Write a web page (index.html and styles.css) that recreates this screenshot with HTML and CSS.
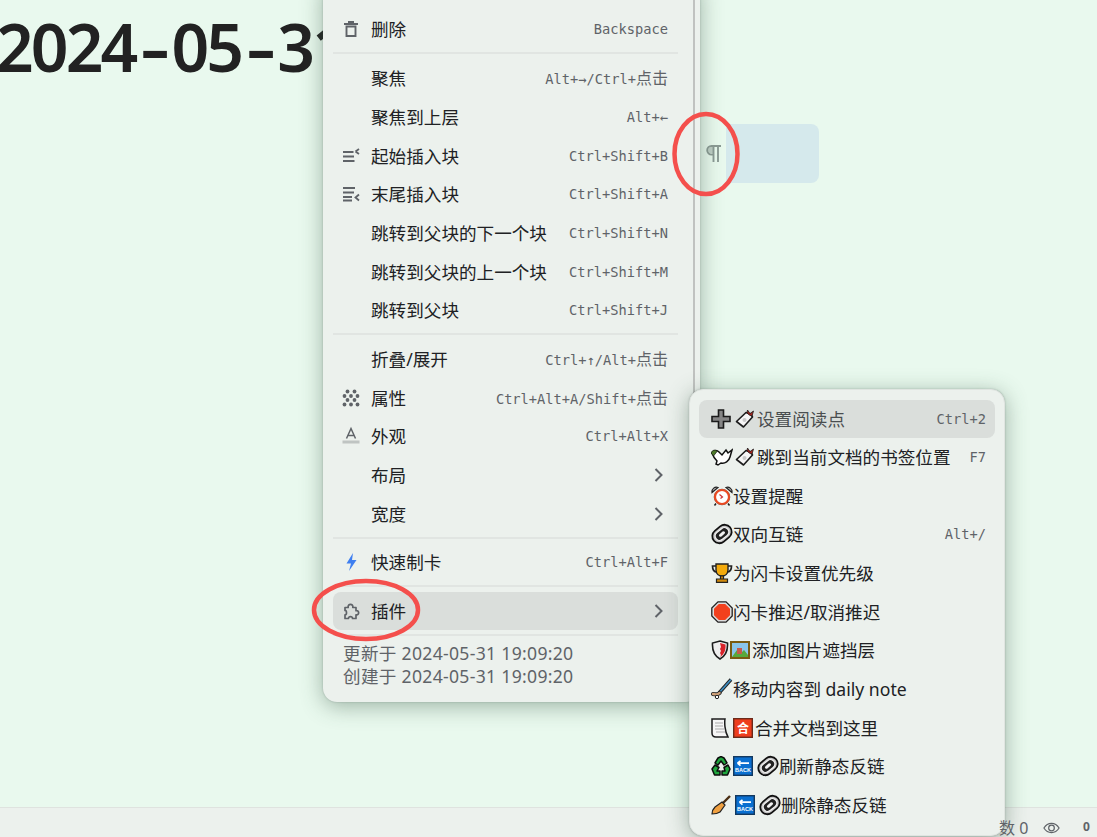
FILE: index.html
```html
<!DOCTYPE html>
<html lang="zh">
<head>
<meta charset="utf-8">
<title>2024-05-31</title>
<link rel="stylesheet" href="styles.css">
</head>
<body>
<svg class="defs" width="0" height="0" aria-hidden="true">
  <defs>
    <symbol id="i-link" viewBox="0 0 22 22"><g transform="rotate(-40 11 11)"><rect x=".5" y="4" width="21" height="14" rx="7" fill="#c8c8c8" stroke="#111" stroke-width="1.800"/><rect x="3.500" y="6.600" width="15" height="8.800" rx="4.400" fill="#222" stroke="#f2f2f2" stroke-width="1.300"/><rect x="7.500" y="9.500" width="7" height="3" rx="1.500" fill="#f2f2f2"/></g></symbol>
    <symbol id="i-tag" viewBox="0 0 20 20"><path d="M1.500 12.500 11 3.500l5 2 1.500 2.500L8.500 18z" fill="#f6f6f6" stroke="#1c1c1c" stroke-width="1.600" stroke-linejoin="round"/><circle cx="9.500" cy="11" r="2" fill="#c9c9c9"/><path d="M12.500 1l2.500 3.500 3.500-2.500-1.500 5-2-.5-3-2.500z" fill="#a8231c" stroke="#1c1c1c" stroke-width=".8"/></symbol>
    <symbol id="i-back" viewBox="0 0 20 20"><rect x=".7" y=".7" width="18.600" height="18.600" fill="#0a6fd0" stroke="#13395f" stroke-width="1.400"/><path d="M4.500 7.200h11.500M4.500 7.200l3-2.400M4.500 7.200l3 2.400" stroke="#fff" stroke-width="1.700" fill="none"/><text x="10" y="16.200" text-anchor="middle" class="tiny">BACK</text></symbol>
  </defs>
</svg>

<main class="doc">
  <h1 class="title">2024<span class="dash">-</span>05<span class="dash">-</span>31</h1>
  <div class="block"></div>
</main>
<footer class="status"></footer>
<svg class="gutter" viewBox="0 0 16 17"><path d="M16 1H6.500a4.300 4.300 0 0 0 0 8.600H8M8.500 1v16M13 1v16" fill="none" stroke="#8b9a94" stroke-width="1.900"/><path d="M8 2H6.500a3.300 3.300 0 0 0 0 6.600H8z" fill="#8b9a94" opacity=".45"/></svg>

<nav class="menu main-menu">
  <div class="row"><svg class="ic" viewBox="0 0 16 16"><path d="M1 3h14M5 1h6M3.500 5.500h9V15h-9z" fill="none" stroke="#5f6368" stroke-width="1.900"/></svg><span class="lbl">删除</span><kbd>Backspace</kbd></div>
  <hr>
  <div class="row"><span class="ic"></span><span class="lbl">聚焦</span><kbd>Alt+→/Ctrl+<span class="kc">点击</span></kbd></div>
  <div class="row"><span class="ic"></span><span class="lbl">聚焦到上层</span><kbd>Alt+←</kbd></div>
  <div class="row"><svg class="ic" viewBox="0 0 16 16"><path d="M0 4h10.500M0 8.500h11M0 13h11.500M12.500 3.500 16 1M12.500 3.500 16 6" fill="none" stroke="#5f6368" stroke-width="1.800"/></svg><span class="lbl">起始插入块</span><kbd>Ctrl+Shift+B</kbd></div>
  <div class="row"><svg class="ic" viewBox="0 0 16 16"><path d="M0 2h12M0 6.500h11M0 11h9M0 14.500h9M16 8.500l-3.500 3 3.500 3" fill="none" stroke="#5f6368" stroke-width="1.800"/></svg><span class="lbl">末尾插入块</span><kbd>Ctrl+Shift+A</kbd></div>
  <div class="row"><span class="ic"></span><span class="lbl">跳转到父块的下一个块</span><kbd>Ctrl+Shift+N</kbd></div>
  <div class="row"><span class="ic"></span><span class="lbl">跳转到父块的上一个块</span><kbd>Ctrl+Shift+M</kbd></div>
  <div class="row"><span class="ic"></span><span class="lbl">跳转到父块</span><kbd>Ctrl+Shift+J</kbd></div>
  <hr>
  <div class="row"><span class="ic"></span><span class="lbl">折叠/展开</span><kbd>Ctrl+↑/Alt+<span class="kc">点击</span></kbd></div>
  <div class="row"><svg class="ic" viewBox="0 0 16 16" fill="#5f6368"><circle cx="4.500" cy="1.500" r="1.900"/><circle cx="11.500" cy="1.500" r="1.900"/><circle cx="1.500" cy="6" r="1.900"/><circle cx="8" cy="6" r="1.900"/><circle cx="14.500" cy="6" r="1.900"/><circle cx="4.500" cy="10" r="1.900"/><circle cx="11.500" cy="10" r="1.900"/><circle cx="1.500" cy="14.500" r="1.900"/><circle cx="8" cy="14.500" r="1.900"/><circle cx="14.500" cy="14.500" r="1.900"/></svg><span class="lbl">属性</span><kbd>Ctrl+Alt+A/Shift+<span class="kc">点击</span></kbd></div>
  <div class="row"><svg class="ic" viewBox="0 0 16 16"><path d="M3.500 10.500 8 .5l4.500 10M5 7.500h6" fill="none" stroke="#5f6368" stroke-width="1.500"/><rect x="-.5" y="12.500" width="17" height="3" fill="#bfc4c2"/></svg><span class="lbl">外观</span><kbd>Ctrl+Alt+X</kbd></div>
  <div class="row"><span class="ic"></span><span class="lbl">布局</span><svg class="chev" viewBox="0 0 10 14"><path d="M1.500 1l6 6-6 6" fill="none" stroke="#5f6368" stroke-width="2"/></svg></div>
  <div class="row"><span class="ic"></span><span class="lbl">宽度</span><svg class="chev" viewBox="0 0 10 14"><path d="M1.500 1l6 6-6 6" fill="none" stroke="#5f6368" stroke-width="2"/></svg></div>
  <hr>
  <div class="row"><svg class="ic" viewBox="0 0 16 16"><path d="M10 -1 3.500 9.500H8L6 17l7.500-11H9z" fill="#3f7ff0"/></svg><span class="lbl">快速制卡</span><kbd>Ctrl+Alt+F</kbd></div>
  <hr>
  <div class="row active"><svg class="ic" viewBox="0 0 16 16"><path d="M2 4.500h3.200c-.9-4.200 5.500-4.200 4.600 0h3.200v3.200c3.500-.9 3.500 5 0 4.100v3.700H9.500c.5-2.500-4.500-2.500-4 0H2v-3.700c2 .5 2-4.800 0-4.300z" fill="none" stroke="#5f6368" stroke-width="1.700" stroke-linejoin="round"/></svg><span class="lbl">插件</span><svg class="chev" viewBox="0 0 10 14"><path d="M1.500 1l6 6-6 6" fill="none" stroke="#5f6368" stroke-width="2"/></svg></div>
  <hr>
  <div class="stamps">更新于 2024-05-31 19:09:20<br>创建于 2024-05-31 19:09:20</div>
</nav>

<nav class="menu sub-menu">
  <div class="row active"><span class="emo"><svg class="e w20" viewBox="0 0 20 20"><path d="M7.500 1h5v6.500H19v5h-6.500V19h-5v-6.500H1v-5h6.500z" fill="#858585" stroke="#1a1a1a" stroke-width="1.600"/></svg><svg class="e w20 ml"><use href="#i-tag"/></svg></span><span class="lbl mute">设置阅读点</span><kbd>Ctrl+2</kbd></div>
  <div class="row"><span class="emo"><svg class="e w22" viewBox="0 0 22 20"><path d="M1 6c2-3 5-3 7-1l3 3 4-5 2 3 4-3-2 7c-1 4-5 7-9 6l-3 2-2-1 1-3C4 12 2 9 1 6z" fill="#fff" stroke="#111" stroke-width="1.500"/><path d="M0 6c1-3 5-4 6-1.500L2.500 9z" fill="#4d7a2a" stroke="#111" stroke-width=".7"/></svg><svg class="e w20 ml0"><use href="#i-tag"/></svg></span><span class="lbl">跳到当前文档的书签位置</span><kbd>F7</kbd></div>
  <div class="row"><span class="emo"><svg class="e w22" viewBox="0 0 22 21"><path d="M1 7c-.5-4 3-6 6-5zM21 7c.5-4-3-6-6-5z" fill="#bbb" stroke="#222" stroke-width="1.200"/><circle cx="11" cy="11.500" r="7.800" fill="#fff" stroke="#222" stroke-width=".6"/><circle cx="11" cy="11.500" r="7" fill="#fff" stroke="#ea4a22" stroke-width="2.200"/><path d="M8.500 9l3 2.500-2 1.500" stroke="#c33" fill="none" stroke-width="1.200"/><path d="M5 18l-1.500 2M17 18l1.500 2" stroke="#222" stroke-width="1.500"/></svg></span><span class="lbl">设置提醒</span></div>
  <div class="row"><span class="emo"><svg class="e w22"><use href="#i-link"/></svg></span><span class="lbl">双向互链</span><kbd>Alt+/</kbd></div>
  <div class="row"><span class="emo"><svg class="e w22" viewBox="0 0 22 20"><path d="M5 1h12v6c0 4-3 6-6 6s-6-2-6-6z" fill="#f3aa0c" stroke="#222" stroke-width="1.400"/><path d="M5 3H1.500c0 4 2 6 4.500 6M17 3h3.500c0 4-2 6-4.500 6" fill="none" stroke="#222" stroke-width="1.700"/><path d="M9.500 13h3v3h-3zM5.500 16h11v3.300h-11z" fill="#d18a0c" stroke="#222" stroke-width="1.200"/></svg></span><span class="lbl">为闪卡设置优先级</span></div>
  <div class="row"><span class="emo"><svg class="e w22" viewBox="0 0 22 22"><path d="M7 .8h8l6.200 6.200v8L15 21.200H7L.8 15V7z" fill="#ddd" stroke="#222" stroke-width="1.300"/><path d="M7.800 3h6.400l4.800 4.800v6.400L14.200 19H7.800L3 14.200V7.800z" fill="#f2401d"/></svg></span><span class="lbl">闪卡推迟/取消推迟</span></div>
  <div class="row"><span class="emo"><svg class="e w18" viewBox="0 0 18 20"><path d="M9 1l7.500 2c.5 8-2 13-7.500 16C3.500 16 1 11 1.500 3z" fill="#eee" stroke="#1c1c1c" stroke-width="1.600"/><path d="M9 3l5.500 1.400C15 10.500 13 14.500 9 17l1-2-1-2 1-2-1-2 1-2z" fill="#d8222a"/></svg><svg class="e w20 ml1" viewBox="0 0 20 20"><rect x="1" y="2" width="18" height="16" fill="#8ac4e8" stroke="#7a5a10" stroke-width="2"/><path d="M2 17l5-7 4 3 3-3 4 5v2z" fill="#58a83a"/><rect x="7" y="8" width="5" height="6" fill="#c65a4a"/></svg></span><span class="lbl">添加图片遮挡层</span></div>
  <div class="row"><span class="emo"><svg class="e w22" viewBox="0 0 22 20"><path d="M20 .5 8 14" stroke="#222" stroke-width="3.400" fill="none"/><path d="M20 .5 8 14" stroke="#3c8ec2" stroke-width="1.600" fill="none"/><path d="M8.500 14c-1.500 2-4 1.500-6.500 1" stroke="#222" stroke-width="4" fill="none" stroke-linecap="round"/><path d="M8.500 14c-1.500 2-4 1.500-6.500 1" stroke="#d0a27a" stroke-width="2.400" fill="none" stroke-linecap="round"/><circle cx="6" cy="18" r="1.700" fill="#fff" stroke="#222"/></svg></span><span class="lbl">移动内容到 daily note</span></div>
  <div class="row"><span class="emo"><svg class="e w18" viewBox="0 0 18 20"><path d="M1 1h13c-.5 3-.5 12 3 18H5C2 19 1 17 1 15z" fill="#f6f6f6" stroke="#1c1c1c" stroke-width="1.500"/><path d="M4 5h8M4 8h8M4 11h9M5 14h9" stroke="#aaa"/></svg><svg class="e w20 ml2" viewBox="0 0 20 20"><rect x=".7" y=".7" width="18.600" height="18.600" fill="#ee3d1c" stroke="#6c2a1a" stroke-width="1.400"/><text x="10" y="14.500" text-anchor="middle" class="kanji">合</text></svg></span><span class="lbl">合并文档到这里</span></div>
  <div class="row"><span class="emo"><svg class="e w20" viewBox="0 0 20 20"><path d="M7 2l3-1.500L13 2l3 5-3 2-3-4-3 4-3-2zM1 13l3-4 4 2.500L6 15h3v4H3.500zM19 13l-2-4-4 2.500L14 15h-3v4h5.500z" fill="#1fa53d" stroke="#0c0c0c" stroke-width="1.500" stroke-linejoin="round"/></svg><svg class="e w20 ml2b"><use href="#i-back"/></svg><svg class="e w22 ml3"><use href="#i-link"/></svg></span><span class="lbl">刷新静态反链</span></div>
  <div class="row"><span class="emo"><svg class="e w20" viewBox="0 0 20 20"><path d="M19 1l-9 9" stroke="#4a2f14" stroke-width="2.400"/><path d="M11 7l3 3-5 7c-3 2-6 2-8 2 0-3 1-5 3-7z" fill="#f0a040" stroke="#222" stroke-width="1.200"/></svg><svg class="e w20 ml3b"><use href="#i-back"/></svg><svg class="e w22 ml3"><use href="#i-link"/></svg></span><span class="lbl">删除静态反链</span></div>
</nav>

<span class="status-text">数 0</span>
<svg class="eye" viewBox="0 0 18 12"><path d="M1 6c4-6.500 12-6.500 16 0-4 6.500-12 6.500-16 0z" fill="none" stroke="#5f6368" stroke-width="1.300"/><circle cx="9" cy="6" r="3" fill="none" stroke="#5f6368" stroke-width="1.300"/></svg>
<span class="status-count">0</span>

<svg class="oval oval-a" viewBox="0 0 70 88"><ellipse cx="35" cy="44" rx="31.500" ry="40" /></svg>
<svg class="oval oval-b" viewBox="0 0 110 64"><ellipse cx="55" cy="32" rx="52" ry="29"/></svg>
</body>
</html>
```
FILE: styles.css
```css
* { box-sizing: border-box; }
html, body { margin: 0; height: 100%; }
body {
  position: relative;
  width: 1097px;
  height: 837px;
  overflow: hidden;
  display: flex;
  flex-direction: column;
  background: #e9f9ee;
  font-family: "Noto Sans", "Noto Sans CJK SC", sans-serif;
  color: #202124;
}
.defs { position: absolute; }
.doc { flex: 1; min-height: 0; }
.title {
  margin: 2px 0 0 -4px;
  font-family: "Noto Sans", "Noto Sans CJK SC", sans-serif;
  font-size: 66px;
  line-height: 88px;
  font-weight: 600;
  letter-spacing: -2.900px;
  color: #222;
  white-space: nowrap;
}
.dash {
  display: inline-block;
  width: 36px;
  text-align: center;
  transform: scaleX(1.400);
}
.block {
  width: 93px;
  height: 59px;
  margin: 34px 0 0 726px;
  background: #d5e9ec;
  border-radius: 0 8px 8px 0;
}
.status {
  height: 30px;
  background: #ecf1ed;
  border-top: 1px solid #dfe3df;
}
.gutter {
  position: absolute;
  left: 705px;
  top: 145px;
  width: 16px;
  height: 17px;
}
.menu {
  position: absolute;
  background: #ecf1ed;
  border-radius: 14px;
  box-shadow: 0 4px 22px rgba(60, 90, 70, .45), 0 0 2px rgba(60, 64, 67, .3);
}
.main-menu {
  left: 323px;
  bottom: 135px;
  width: 377px;
  padding: 30px 22px 14px 10px;
}
.main-menu::after {
  content: "";
  position: absolute;
  top: 0;
  bottom: 14px;
  right: 5px;
  width: 2px;
  background: #c0c2c0;
}
.sub-menu {
  left: 689px;
  top: 389px;
  width: 316px;
  height: 447px;
  padding: 9.500px 9px;
  border: 1px solid #e0e5e1;
  border-radius: 14px;
}
.row {
  display: flex;
  align-items: center;
  height: 38px;
  margin-bottom: .67px;
  padding: 0 10px;
  border-radius: 8px;
  font-size: 17.600px;
  line-height: 38px;
  white-space: nowrap;
}
.sub-menu .row { padding: 0 9px 0 12px; }
.row.active { background: #dadedb; }
.ic { flex: none; width: 16px; height: 16px; margin-right: 12px; overflow: visible; }
.lbl { flex: 1; }
.lbl.mute { color: #4a4e50; }
kbd {
  flex: none;
  font-family: "DejaVu Sans Mono", "Noto Sans CJK SC", monospace;
  font-size: 13.700px;
  color: #5f6368;
}
.kc { font-family: "Noto Sans CJK SC", sans-serif; font-size: 16px; }
.chev { flex: none; width: 10px; height: 14px; margin-right: 4px; }
.main-menu hr {
  height: 2px;
  margin: 4px 0 4.800px;
  border: 0;
  background: #e1e5e2;
}
.stamps {
  padding: 1px 10px 0;
  font-size: 17.600px;
  line-height: 23px;
  letter-spacing: .3px;
  color: #5f6368;
}
.emo { display: flex; align-items: center; flex: none; }
.e { display: block; height: 20px; flex: none; }
.w18 { width: 18px; }
.w20 { width: 20px; }
.w22 { width: 22px; height: 22px; }
.ml { margin-left: 4px; margin-right: 2px; }
.ml0 { margin-left: 2px; margin-right: 2px; }
.ml1 { margin-left: 1px; margin-right: 2px; }
.ml2 { margin-left: 4px; margin-right: 2px; }
.ml2b { margin-left: 2px; }
.ml3 { margin-left: 4px; }
.ml3b { margin-left: 4px; }
.tiny {
  font-family: "Liberation Sans", sans-serif;
  font-size: 5.500px;
  font-weight: 700;
  fill: #fff;
}
.kanji {
  font-family: "Noto Sans CJK SC", sans-serif;
  font-size: 12px;
  font-weight: 700;
  fill: #fff;
}
.status-text {
  position: absolute;
  left: 999px;
  top: 820px;
  font-size: 16px;
  line-height: 17px;
  color: #5f6368;
}
.eye { position: absolute; left: 1043px; top: 822px; width: 17px; height: 12px; }
.status-count {
  position: absolute;
  left: 1083px;
  top: 820px;
  font-size: 12px;
  font-weight: 700;
  line-height: 14px;
  color: #5f6368;
}
.oval { position: absolute; fill: none; stroke: #f44f4c; stroke-width: 4.500; pointer-events: none; }
.oval-a { left: 671px; top: 110px; width: 70px; height: 88px; }
.oval-b { left: 311px; top: 578px; width: 110px; height: 64px; }
```
